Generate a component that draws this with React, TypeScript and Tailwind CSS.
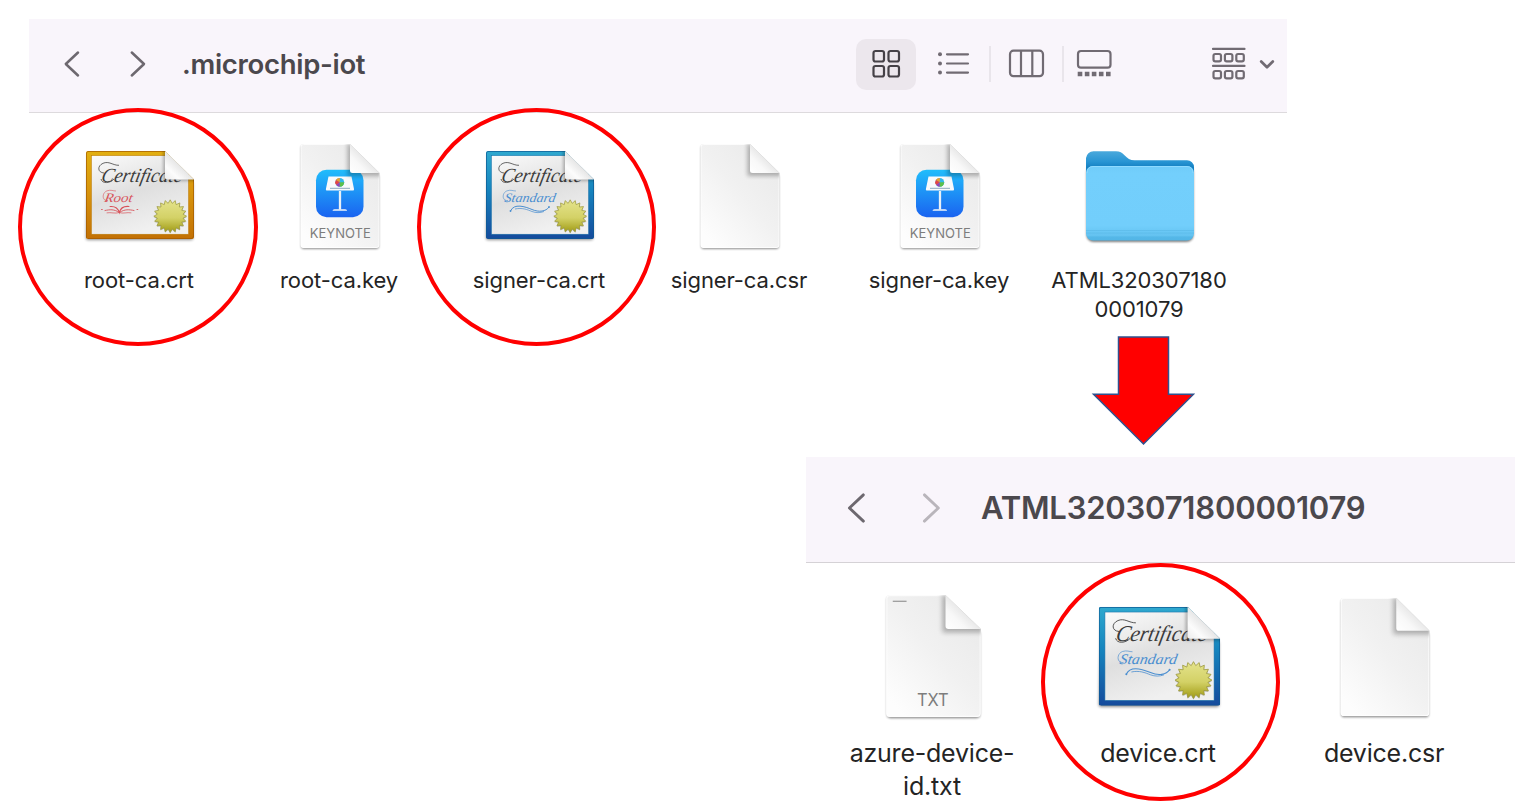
import React from "react";

type CertKind = "root" | "standard";

const SEAL_POINTS = 20;

function Certificate({ kind, className }: { kind: CertKind; className: string }) {
  const root = kind === "root";
  const id = React.useId();
  const ink = root ? "#d8535a" : "#4a8ed0";
  const seal = Array.from({ length: SEAL_POINTS * 2 }, (_, i) => {
    const r = i % 2 ? 13 : 16.4;
    const a = (i * Math.PI) / SEAL_POINTS - Math.PI / 2;
    return `${(90.2 + r * Math.cos(a)).toFixed(2)},${(71.2 + r * Math.sin(a)).toFixed(2)}`;
  }).join(" ");
  return (
    <svg viewBox="0 0 120 100" className={className}>
      <defs>
        <linearGradient id={id + "f"} x1="0" y1="0" x2="0" y2="1">
          <stop offset="0" stopColor={root ? "#e2b011" : "#2fa9cf"} />
          <stop offset="0.45" stopColor={root ? "#d8950c" : "#1583bd"} />
          <stop offset="1" stopColor={root ? "#c27004" : "#154a9c"} />
        </linearGradient>
        <linearGradient id={id + "p"} x1="0" y1="0" x2="0.4" y2="1">
          <stop offset="0" stopColor="#fbfbfb" />
          <stop offset="0.3" stopColor="#ececec" />
          <stop offset="0.55" stopColor="#dfdfdf" />
          <stop offset="1" stopColor="#f0f0f0" />
        </linearGradient>
        <linearGradient id={id + "s"} x1="0" y1="0" x2="0" y2="1">
          <stop offset="0" stopColor="#e4e38c" />
          <stop offset="0.55" stopColor="#d3d166" />
          <stop offset="1" stopColor="#a09b14" />
        </linearGradient>
        <linearGradient id={id + "c"} x1="0" y1="1" x2="0.5" y2="0.5">
          <stop offset="0" stopColor="#ececec" />
          <stop offset="0.5" stopColor="#fcfcfc" />
          <stop offset="1" stopColor="#e6e6e6" />
        </linearGradient>
        <filter id={id + "b"} x="-20%" y="-20%" width="140%" height="140%">
          <feGaussianBlur stdDeviation="1.6" />
        </filter>
        <clipPath id={id + "k"}>
          <path d="M8 6H85L114 34.500V92a2 2 0 0 1-2 2H8a2 2 0 0 1-2-2V8a2 2 0 0 1 2-2z" />
        </clipPath>
      </defs>
      <path d="M8 9H82L113 38V93a2 2 0 0 1-2 2H8a2 2 0 0 1-2-2z" fill="#000" opacity="0.45" filter={`url(#${id}b)`} />
      <g clipPath={`url(#${id}k)`}>
        <rect x="6" y="6" width="108" height="88" fill={`url(#${id}f)`} />
        <path d="M6.500 93V8q0-1.500 1.500-1.500H86M113.500 34V91q0 2.500-2 2.500H8" fill="none" stroke={root ? "#a35a00" : "#0d5a93"} strokeWidth="1" opacity="0.7" />
        <rect x="11.500" y="10.700" width="97" height="78.500" fill={`url(#${id}p)`} stroke={root ? "#b97b0a" : "#1d73a8"} strokeWidth="0.5" />
        <text transform="translate(20.500 36.500) skewX(-12)" fontSize="20" textLength="81" lengthAdjust="spacingAndGlyphs" fill="#3c3c3c" className="italic [font-family:'Liberation_Serif',serif]">Certificate</text>
        <path d="M24 28C17.500 27.500 17 21 23 18.300C29 15.700 33 20.500 39 20.300M21 34C22 39 30 38.500 34 34" fill="none" stroke="#444" strokeWidth="0.8" />
        <text transform="translate(24 56.500) skewX(-10)" fontSize="13" textLength={root ? 28 : 51} lengthAdjust="spacingAndGlyphs" fill={ink} className="italic [font-family:'Liberation_Serif',serif]">
          {root ? "Root" : "Standard"}
        </text>
        <path d="M28 55.500C22 56.500 21.500 48 27 45.800C31 44.500 33 46 36 46" fill="none" stroke={ink} strokeWidth="0.6" />
        {root ? (
          <g fill="none" stroke={ink} strokeLinecap="round">
            <path d="M21.500 64.500h.8M57 64.500h.8" strokeWidth="0.9" />
            <path d="M25 65.500C30 64.500 34 64 39.300 67.500C45 64 49 64.500 54 65.500" strokeWidth="0.9" />
            <path d="M30 61.500C35 61 38 63 39.300 67.500C40.500 63 44 61 49 61.500" strokeWidth="1.100" />
            <path d="M27 67.800C31 67 35 69 39.300 67.500C43 69 47 67 51 67.800" strokeWidth="0.7" />
          </g>
        ) : (
          <g fill="none" stroke={ink}>
            <path d="M30.500 66C34 58 45 61.500 52 64.500C59 67.500 66 66.500 69 62" strokeWidth="1" />
            <path d="M35 64C42 62.500 47 64.500 52 66.500C56 68 60 68 64 66.500" strokeWidth="0.7" />
            <circle cx="30.500" cy="66" r="0.9" fill={ink} stroke="none" />
            <circle cx="69" cy="62" r="0.9" fill={ink} stroke="none" />
          </g>
        )}
        <polygon points={seal} fill="#000" opacity="0.2" transform="translate(0 1)" />
        <polygon points={seal} fill={`url(#${id}s)`} stroke="#9a963a" strokeWidth="0.7" />
        <path d="M83 4V36H116V33L85 6z" fill="#000" opacity="0.25" filter={`url(#${id}b)`} />
      </g>
      <path d="M85 6L114 34.500H87a2 2 0 0 1-2-2z" fill={`url(#${id}c)`} />
    </svg>
  );
}

function Doc({ kind, className }: { kind: "plain" | "keynote" | "txt"; className: string }) {
  const id = React.useId();
  return (
    <svg viewBox="0 0 96 116" preserveAspectRatio="none" className={className}>
      <defs>
        <linearGradient id={id + "p"} x1="1" y1="0.1" x2="0.2" y2="1">
          <stop offset="0" stopColor="#e9e9e9" />
          <stop offset="0.5" stopColor="#f1f1f1" />
          <stop offset="1" stopColor="#fdfdfd" />
        </linearGradient>
        <linearGradient id={id + "c"} x1="0" y1="1" x2="0.5" y2="0.5">
          <stop offset="0" stopColor="#ffffff" />
          <stop offset="0.6" stopColor="#f8f8f8" />
          <stop offset="1" stopColor="#e9e9e9" />
        </linearGradient>
        <linearGradient id={id + "t"} x1="0" y1="0" x2="0" y2="1">
          <stop offset="0" stopColor="#21bdfb" />
          <stop offset="1" stopColor="#1a63f0" />
        </linearGradient>
        <filter id={id + "b"} x="-20%" y="-20%" width="140%" height="140%">
          <feGaussianBlur stdDeviation="0.9" />
        </filter>
        <filter id={id + "d"} x="-30%" y="-30%" width="160%" height="160%">
          <feGaussianBlur stdDeviation="2.2" />
        </filter>
        <clipPath id={id + "k"}>
          <path d="M11.500 6H58L87.500 35V107a3 3 0 0 1-3 3H11.500a3 3 0 0 1-3-3V9a3 3 0 0 1 3-3z" />
        </clipPath>
      </defs>
      <path d="M12 8H56L87 38V108a3 3 0 0 1-3 3H12a3 3 0 0 1-3-3V9a3 3 0 0 1 3-1z" fill="#000" opacity="0.45" filter={`url(#${id}b)`} />
      <g clipPath={`url(#${id}k)`}>
        <rect x="8" y="6" width="80" height="104" fill={`url(#${id}p)`} />
        <path d="M11.500 6.500H58M87 35V107q0 2.500-2.500 2.500H11.500q-2.500 0-2.500-2.500V9q0-2.500 2.500-2.500" fill="none" stroke="#fff" strokeWidth="1" opacity="0.8" />
        {kind === "keynote" && (
          <g>
            <rect x="24" y="31.700" width="47.500" height="47.500" rx="10.500" fill={`url(#${id}t)`} />
            <path d="M36.500 38.500h23l2.500 12.500q.3 1.600-1 1.600H35q-1.500 0-1.100-1.600z" fill="#f8fafc" />
            <path d="M38 50.300h20" stroke="#7f9fb8" strokeWidth="0.9" />
            <path d="M48 53v18.500" stroke="#e9f1f7" strokeWidth="2.300" />
            <path d="M40.500 72.800q0-1.500 2-1.500h10.600q2 0 2 1.500z" fill="#f3f6f9" />
            <circle cx="47.800" cy="44.300" r="4.400" fill="#31b8e8" />
            <path d="M47.800 44.300V39.900A4.400 4.400 0 0 0 43.800 42z" fill="#efa02d" />
            <path d="M47.800 44.300L43.800 42A4.400 4.400 0 0 0 44.200 47z" fill="#e94442" />
            <path d="M47.800 44.300L44.200 47A4.400 4.400 0 0 0 47.800 48.700z" fill="#9b3fb4" />
            <path d="M47.800 44.300V48.700A4.400 4.400 0 0 0 52.200 44.300z" fill="#5cc04a" />
          </g>
        )}
        <path d="M55.500 4V38H90V34L58 6z" fill="#000" opacity="0.28" filter={`url(#${id}d)`} />
      </g>
      <path d="M58 6L87.500 35H60.500a2.500 2.500 0 0 1-2.500-2.500z" fill={`url(#${id}c)`} />
      {kind === "keynote" && (
        <text x="17.800" y="100" fontSize="13.500" textLength="61" lengthAdjust="spacingAndGlyphs" fill="#7d7d7d" className="[font-family:Inter,sans-serif]">KEYNOTE</text>
      )}
      {kind === "txt" && (
        <>
          <text x="34.200" y="100.500" fontSize="14.500" textLength="26.500" lengthAdjust="spacingAndGlyphs" fill="#7d7d7d" className="[font-family:Inter,sans-serif]">TXT</text>
          <path d="M14 11.300h11.500" stroke="#888" strokeWidth="0.9" />
        </>
      )}
    </svg>
  );
}

function Folder() {
  return (
    <svg viewBox="0 0 120 104" className="mt-[2px] h-[104px] w-[120px]">
      <defs>
        <linearGradient id="fb" x1="0" y1="0" x2="0" y2="1">
          <stop offset="0" stopColor="#4aa9dc" />
          <stop offset="0.13" stopColor="#2794d3" />
          <stop offset="0.2" stopColor="#1480c2" />
          <stop offset="1" stopColor="#3da4de" />
        </linearGradient>
        <linearGradient id="ff" x1="0" y1="0" x2="0" y2="1">
          <stop offset="0" stopColor="#6fcbf9" />
          <stop offset="0.1" stopColor="#73cffc" />
          <stop offset="0.8" stopColor="#72cefb" />
          <stop offset="0.94" stopColor="#63c2f0" />
          <stop offset="0.95" stopColor="#55b8e8" />
          <stop offset="1" stopColor="#52b5e6" />
        </linearGradient>
        <filter id="fs"><feGaussianBlur stdDeviation="1.100" /></filter>
      </defs>
      <rect x="6.500" y="20" width="107" height="77" rx="7" fill="#000" opacity="0.5" filter="url(#fs)" />
      <path d="M6 13a7.500 7.500 0 0 1 7.500-6.800H36c4 0 6 1.500 8.500 4 3 3 5.500 5 10 5H107a7 7 0 0 1 7 7V88H6z" fill="url(#fb)" />
      <rect x="6" y="21" width="108" height="74.500" rx="7" fill="url(#ff)" />
      <path d="M7 28q0-6.500 6-6.500h94q6 0 6 6.500" fill="none" stroke="#8edaff" strokeWidth="1" />
      <path d="M6 85.500H114M6 88H114" stroke="#58b8e6" strokeWidth="0.8" opacity="0.7" />
    </svg>
  );
}

function Chevron({ dir, big, faded }: { dir: "left" | "right"; big?: boolean; faded?: boolean }) {
  return (
    <svg viewBox="0 0 16 28" className={big ? "h-[32px] w-[19px] shrink-0" : "mb-px h-[28px] w-[16px] shrink-0"}>
      <path
        d={dir === "left" ? "M14 2.500L1.800 14L14 25.500" : "M1.800 2.500L14 14L1.800 25.500"}
        fill="none"
        stroke={faded ? "#b9b5bb" : "#6d686f"}
        strokeWidth="2.500"
        strokeLinecap="round"
        strokeLinejoin="round"
      />
    </svg>
  );
}

function Item({ children, label }: { children: React.ReactNode; label: React.ReactNode }) {
  return (
    <div className="flex w-[200px] flex-col items-center">
      <div className="flex h-[116px] w-full items-center justify-center pl-px">{children}</div>
      <div className="mt-[12px] whitespace-nowrap text-center text-[22px] leading-[29px] tracking-[-0.100px]">{label}</div>
    </div>
  );
}

function DeviceItem({ children, label }: { children: React.ReactNode; label: React.ReactNode }) {
  return (
    <div className="flex w-[226px] flex-col items-center">
      <div className="flex h-[140px] w-full items-start justify-center">{children}</div>
      <div className="mt-[9px] whitespace-nowrap pr-[2px] text-center text-[25px] leading-[33px] tracking-[-0.220px]">{label}</div>
    </div>
  );
}

function Ring({ className }: { className: string }) {
  return <div className={"absolute h-[238px] rounded-[50%] border-4 border-[#ff0000] " + className} />;
}

export default function App() {
  const line = { fill: "none", stroke: "#716b73", strokeWidth: 2.2, strokeLinecap: "round" as const, strokeLinejoin: "round" as const };
  return (
    <div className="relative flex h-[806px] w-[1538px] flex-col overflow-hidden bg-white pt-[19px] text-[#242424] [font-family:Inter,sans-serif]">
      <section className="ml-[29px] w-[1258px]">
        <header className="flex h-[94px] items-center border-b border-[#dddadd] bg-[#f9f5fb] pb-[3px] pl-[35px]">
          <Chevron dir="left" />
          <div className="w-[50px] shrink-0" />
          <Chevron dir="right" />
          <h1 className="ml-[36px] w-[674px] shrink-0 whitespace-nowrap pb-px text-[27.500px] font-semibold leading-[36px] tracking-[-0.300px] text-[#4b484d]">
            .microchip-iot
          </h1>
          <div className="flex h-[51px] w-[60px] shrink-0 items-center justify-center rounded-[10px] bg-[#ece7ed]">
            <svg viewBox="0 0 30 30" className="mb-px h-[30px] w-[30px]" {...line} stroke="#454147">
              <rect x="2.500" y="2" width="10.500" height="10.500" rx="2" />
              <rect x="17.500" y="2" width="10.500" height="10.500" rx="2" />
              <rect x="2.500" y="17" width="10.500" height="10.500" rx="2" />
              <rect x="17.500" y="17" width="10.500" height="10.500" rx="2" />
            </svg>
          </div>
          <svg viewBox="0 0 33 34" className="mb-px ml-[21px] h-[34px] w-[33px] shrink-0" {...line}>
            <path d="M10 7.300H31M10 16.500H31M10 25.600H31" />
            <g fill="#716b73" stroke="none"><circle cx="3" cy="7.300" r="2" /><circle cx="3" cy="16.500" r="2" /><circle cx="3" cy="25.600" r="2" /></g>
          </svg>
          <div className="ml-[19px] h-[36px] w-[1.500px] shrink-0 bg-[#e9e5eb]" />
          <svg viewBox="0 0 37 34" className="mb-px ml-[17.500px] h-[34px] w-[37px] shrink-0" {...line}>
            <rect x="2" y="3.700" width="33" height="25.500" rx="3.500" />
            <path d="M13 4V29M24.300 4V29" />
          </svg>
          <div className="ml-[17px] h-[36px] w-[1.500px] shrink-0 bg-[#e9e5eb]" />
          <svg viewBox="0 0 37 34" className="mb-px ml-[12.500px] h-[34px] w-[37px] shrink-0" {...line}>
            <rect x="2" y="4" width="32.500" height="16.700" rx="3" />
            <path d="M1.700 27H6.300M8.800 27H13.400M15.800 27H20.400M22.900 27H27.500M30 27H34.600" strokeWidth="4.600" strokeLinecap="butt" />
          </svg>
          <svg viewBox="0 0 35 34" className="mb-px ml-[98px] h-[34px] w-[35px] shrink-0" {...line}>
            <path d="M2 1.900H33.500M2 18.900H33.500" />
            {[2.5, 13.9, 25.3].map((x) => (
              <g key={x}>
                <rect x={x} y="7" width="7.500" height="7.300" rx="1.800" />
                <rect x={x} y="24" width="7.500" height="7.300" rx="1.800" />
              </g>
            ))}
          </svg>
          <svg viewBox="0 0 18 12" className="ml-[12px] h-[12px] w-[18px] shrink-0">
            <path d="M3.200 3.500L9 9.300L14.800 3.500" {...line} strokeWidth={2.7} />
          </svg>
        </header>
        <div className="ml-[10px] mt-[25px] flex">
          <Item label="root-ca.crt"><Certificate kind="root" className="mb-[2px] h-[100px] w-[120px]" /></Item>
          <Item label="root-ca.key"><Doc kind="keynote" className="h-[116px] w-[96px]" /></Item>
          <Item label="signer-ca.crt"><Certificate kind="standard" className="mb-[2px] h-[100px] w-[120px]" /></Item>
          <Item label="signer-ca.csr"><Doc kind="plain" className="h-[116px] w-[96px]" /></Item>
          <Item label="signer-ca.key"><Doc kind="keynote" className="h-[116px] w-[96px]" /></Item>
          <Item label={<>ATML320307180<br />0001079</>}><Folder /></Item>
        </div>
      </section>
      <svg viewBox="0 0 104 112" className="ml-[1091px] mt-[10px] h-[112px] w-[104px] shrink-0">
        <path d="M27.500 3H77.500V60.300H102.500L52.500 110L2.500 60.300H27.500z" fill="#ff0000" stroke="#2f528f" strokeWidth="1.500" />
      </svg>
      <section className="ml-[806px] mt-[11px] w-[709px]">
        <header className="flex h-[106px] items-center border-b border-[#d5d2d6] bg-[#f9f5fb] pb-[4px] pl-[41px]">
          <Chevron dir="left" big />
          <div className="w-[56px] shrink-0" />
          <Chevron dir="right" big faded />
          <h2 className="ml-[40px] whitespace-nowrap text-[31px] font-semibold leading-[40px] tracking-[-0.200px] text-[#4b484d]">ATML3203071800001079</h2>
        </header>
        <div className="ml-[14px] mt-[25px] flex">
          <DeviceItem label={<>azure-device-<br />id.txt</>}><Doc kind="txt" className="h-[136px] w-[115px]" /></DeviceItem>
          <DeviceItem label="device.crt"><Certificate kind="standard" className="mt-[11.500px] h-[112.500px] w-[135px]" /></DeviceItem>
          <DeviceItem label="device.csr"><Doc kind="plain" className="mt-[3px] h-[132px] w-[108px]" /></DeviceItem>
        </div>
      </section>
      <Ring className="left-[18px] top-[108px] w-[240px]" />
      <Ring className="left-[417px] top-[108px] w-[239px]" />
      <Ring className="left-[1041px] top-[563px] w-[239px]" />
    </div>
  );
}
